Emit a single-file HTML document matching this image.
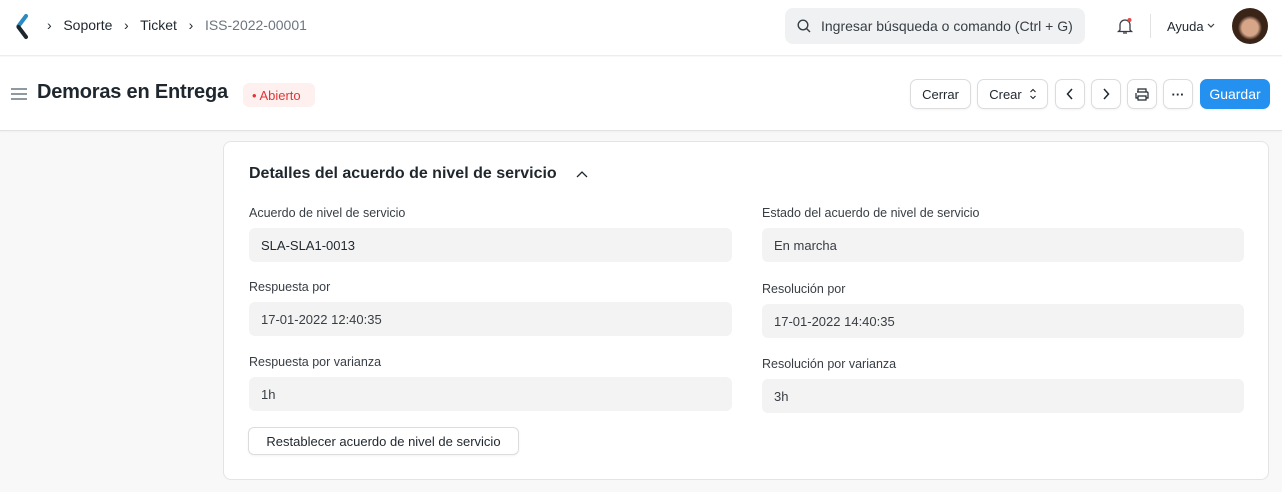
<!DOCTYPE html>
<html><head><meta charset="utf-8"><style>
*{box-sizing:border-box;margin:0;padding:0}
body{width:1282px;height:492px;overflow:hidden;font-family:"Liberation Sans",sans-serif;background:#f8f8f8;color:#1f272e;position:relative}
.a{position:absolute}
.hdr{left:0;top:0;width:1282px;height:56px;background:#fff;border-bottom:1px solid #ececec}
.tb{left:0;top:57px;width:1282px;height:74px;background:#fff;border-bottom:1px solid #e2e2e2;box-shadow:0 1px 2px rgba(0,0,0,.04)}
.bc{font-size:14px;color:#1f272e;top:17px}
.btn{top:79px;height:30px;border:1px solid #dcdcdc;border-radius:7px;background:#fff;font-size:13px;display:flex;align-items:center;justify-content:center;box-shadow:0 1px 2px rgba(0,0,0,.05)}
.card{left:223px;top:141px;width:1046px;height:339px;background:#fff;border:1px solid #e4e4e4;border-radius:8px}
.lb{font-size:12.5px;color:#383e44}
.in{height:34px;background:#f3f3f3;border-radius:6px;font-size:13px;color:#383e44;padding-left:12px;display:flex;align-items:center}
</style></head><body>
<div class="a hdr"></div>
<svg class="a" style="left:15px;top:14px" width="14" height="26" viewBox="0 0 14 26"><path d="M11 2 L3.5 12" stroke="#2b8ac1" stroke-width="4" stroke-linecap="round"/><path d="M3.5 13 L11 23" stroke="#1f272e" stroke-width="4" stroke-linecap="round"/></svg>
<div class="a bc" style="left:47px">›&nbsp;&nbsp; Soporte &nbsp;&nbsp;›&nbsp;&nbsp; Ticket &nbsp;&nbsp;›&nbsp;&nbsp; <span style="color:#6c7680">ISS-2022-00001</span></div>
<div class="a" style="left:785px;top:8px;width:300px;height:36px;background:#f0f1f2;border-radius:8px;font-size:14px;color:#383e44;padding:10px 0 0 36px">Ingresar búsqueda o comando (Ctrl + G)</div>
<svg class="a" style="left:797px;top:19px" width="14" height="14" viewBox="0 0 14 14"><circle cx="6" cy="6" r="4.8" fill="none" stroke="#383e44" stroke-width="1.4"/><path d="M9.5 9.5L13 13" stroke="#383e44" stroke-width="1.4"/></svg>
<svg class="a" style="left:1116px;top:16px" width="18" height="20" viewBox="0 0 18 20"><path d="M4 14V9a5 5 0 0 1 10 0v5l1.5 1.5h-13z M7 17h4" fill="none" stroke="#383e44" stroke-width="1.3"/><circle cx="13.5" cy="4" r="2" fill="#e24c4c"/></svg>
<div class="a" style="left:1150px;top:14px;width:1px;height:24px;background:#e2e2e2"></div>
<div class="a" style="left:1167px;top:19px;font-size:13px">Ayuda</div>
<svg class="a" style="left:1207px;top:23px" width="8" height="6"><path d="M1 1l3 3 3-3" fill="none" stroke="#383e44" stroke-width="1.2"/></svg>
<div class="a" style="left:1232px;top:8px;width:36px;height:36px;border-radius:50%;background:radial-gradient(circle at 50% 55%,#d7a689 0 30%,#3a2418 45%)"></div>
<div class="a tb"></div>
<svg class="a" style="left:11px;top:87px" width="16" height="14"><path d="M0 2h16M0 7h16M0 12h16" stroke="#6c7680" stroke-width="1.5"/></svg>
<div class="a" style="left:37px;top:81px;font-size:20px;font-weight:bold;letter-spacing:-0.2px">Demoras en Entrega</div>
<div class="a" style="left:243px;top:83px;width:72px;height:24px;background:#fff0f0;border-radius:6px;color:#e03636;font-size:13px;padding:5px 0 0 9px">• Abierto</div>
<div class="a btn" style="left:910px;width:61px">Cerrar</div>
<div class="a btn" style="left:977px;width:71px">Crear <svg style="margin-left:8px" width="6" height="12"><path d="M0.5 4L3 1.5 5.5 4M0.5 8L3 10.5 5.5 8" fill="none" stroke="#1f272e" stroke-width="1.1"/></svg></div>
<div class="a btn" style="left:1055px;width:30px"><svg width="8" height="12"><path d="M6 1L1.5 6 6 11" fill="none" stroke="#1f272e" stroke-width="1.5"/></svg></div>
<div class="a btn" style="left:1091px;width:30px"><svg width="8" height="12"><path d="M2 1l4.5 5L2 11" fill="none" stroke="#1f272e" stroke-width="1.5"/></svg></div>
<div class="a btn" style="left:1127px;width:30px"><svg width="14" height="13"><path d="M3 4V1h8v3M2 4h10a1 1 0 0 1 1 1v5h-2M3 10H1V5M3 8h8v4H3z" fill="none" stroke="#1f272e" stroke-width="1.2"/></svg></div>
<div class="a btn" style="left:1163px;width:30px;font-weight:bold">···</div>
<div class="a btn" style="left:1200px;width:70px;background:#2490ef;border-color:#2490ef;color:#fff;font-size:14px">Guardar</div>
<div class="a card"></div>
<div class="a" style="left:249px;top:165px;font-size:16px;font-weight:bold">Detalles del acuerdo de nivel de servicio</div>
<svg class="a" style="left:576px;top:170px" width="12" height="10"><path d="M1 7l5-5 5 5" fill="none" stroke="#1f272e" stroke-width="1.3"/></svg>
<div class="a lb" style="left:249px;top:206px">Acuerdo de nivel de servicio</div>
<div class="a in" style="left:249px;top:228px;width:483px;color:#1f272e">SLA-SLA1-0013</div>
<div class="a lb" style="left:249px;top:280px">Respuesta por</div>
<div class="a in" style="left:249px;top:302px;width:483px">17-01-2022 12:40:35</div>
<div class="a lb" style="left:249px;top:355px">Respuesta por varianza</div>
<div class="a in" style="left:249px;top:377px;width:483px">1h</div>
<div class="a lb" style="left:762px;top:206px">Estado del acuerdo de nivel de servicio</div>
<div class="a in" style="left:762px;top:228px;width:482px">En marcha</div>
<div class="a lb" style="left:762px;top:282px">Resolución por</div>
<div class="a in" style="left:762px;top:304px;width:482px">17-01-2022 14:40:35</div>
<div class="a lb" style="left:762px;top:357px">Resolución por varianza</div>
<div class="a in" style="left:762px;top:379px;width:482px">3h</div>
<div class="a" style="left:248px;top:427px;width:271px;height:28px;border:1px solid #dcdcdc;border-radius:6px;font-size:13px;display:flex;align-items:center;justify-content:center;box-shadow:0 1px 2px rgba(0,0,0,.05)">Restablecer acuerdo de nivel de servicio</div>
</body></html>
